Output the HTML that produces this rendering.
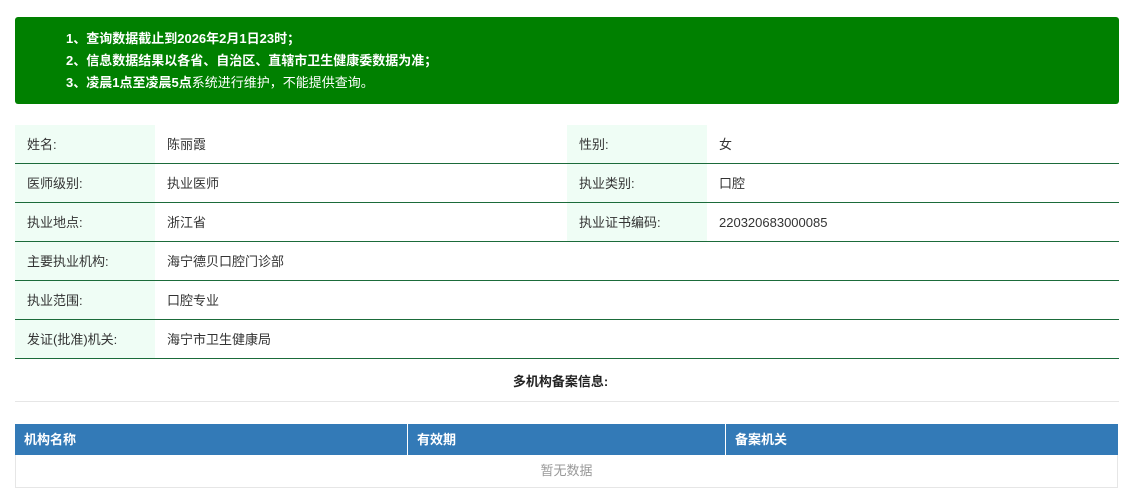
<!DOCTYPE html>
<html><head><meta charset="utf-8"><style>
body{margin:0;width:1121px;height:497px;background:#fff;font-family:"Liberation Sans","Noto Sans CJK SC",sans-serif;font-size:13px;color:#333;overflow:hidden;position:relative}
.notice{position:absolute;left:15px;top:17px;width:1104px;height:87px;background:#008000;border-radius:3px;color:#fff;font-size:13px}
.notice div{position:absolute;left:51px;line-height:20px}
.row{position:absolute;left:15px;width:1104px;height:38px;border-bottom:1px solid #1b6b3a}
.c{position:absolute;top:0;height:38px;line-height:40px}
.l{background:#effdf5;padding-left:12px;box-sizing:border-box;width:140px}
h4{position:absolute;left:0;width:1121px;top:371px;margin:0;text-align:center;font-size:13px;font-weight:bold;color:#222}
.hr{position:absolute;left:15px;width:1104px;top:401px;border-top:1px solid #e6e6e6}
.th{position:absolute;top:424px;height:31px;line-height:31px;background:#337ab7;color:#fff;font-weight:bold;padding-left:9px;box-sizing:border-box}
.empty{position:absolute;left:15px;top:455px;width:1103px;height:33px;border:1px solid #e6e6e6;border-top:0;box-sizing:border-box;text-align:center;line-height:32px;color:#999}
</style></head><body>
<div class="notice">
<div style="top:12px"><b>1、查询数据截止到2026年2月1日23时；</b></div>
<div style="top:34px"><b>2、信息数据结果以各省、自治区、直辖市卫生健康委数据为准；</b></div>
<div style="top:56px"><b>3、凌晨1点至凌晨5点</b>系统进行维护，不能提供查询。</div>
</div>
<div class="row" style="top:125px"><div class="c l" style="left:0">姓名:</div><div class="c" style="left:152px">陈丽霞</div><div class="c l" style="left:552px">性别:</div><div class="c" style="left:704px">女</div></div>
<div class="row" style="top:164px"><div class="c l" style="left:0">医师级别:</div><div class="c" style="left:152px">执业医师</div><div class="c l" style="left:552px">执业类别:</div><div class="c" style="left:704px">口腔</div></div>
<div class="row" style="top:203px"><div class="c l" style="left:0">执业地点:</div><div class="c" style="left:152px">浙江省</div><div class="c l" style="left:552px">执业证书编码:</div><div class="c" style="left:704px">220320683000085</div></div>
<div class="row" style="top:242px"><div class="c l" style="left:0">主要执业机构:</div><div class="c" style="left:152px">海宁德贝口腔门诊部</div></div>
<div class="row" style="top:281px"><div class="c l" style="left:0">执业范围:</div><div class="c" style="left:152px">口腔专业</div></div>
<div class="row" style="top:320px"><div class="c l" style="left:0">发证(批准)机关:</div><div class="c" style="left:152px">海宁市卫生健康局</div></div>
<h4>多机构备案信息:</h4>
<div class="hr"></div>
<div class="th" style="left:15px;width:392px">机构名称</div>
<div class="th" style="left:408px;width:317px">有效期</div>
<div class="th" style="left:726px;width:392px">备案机关</div>
<div class="empty">暂无数据</div>
</body></html>
